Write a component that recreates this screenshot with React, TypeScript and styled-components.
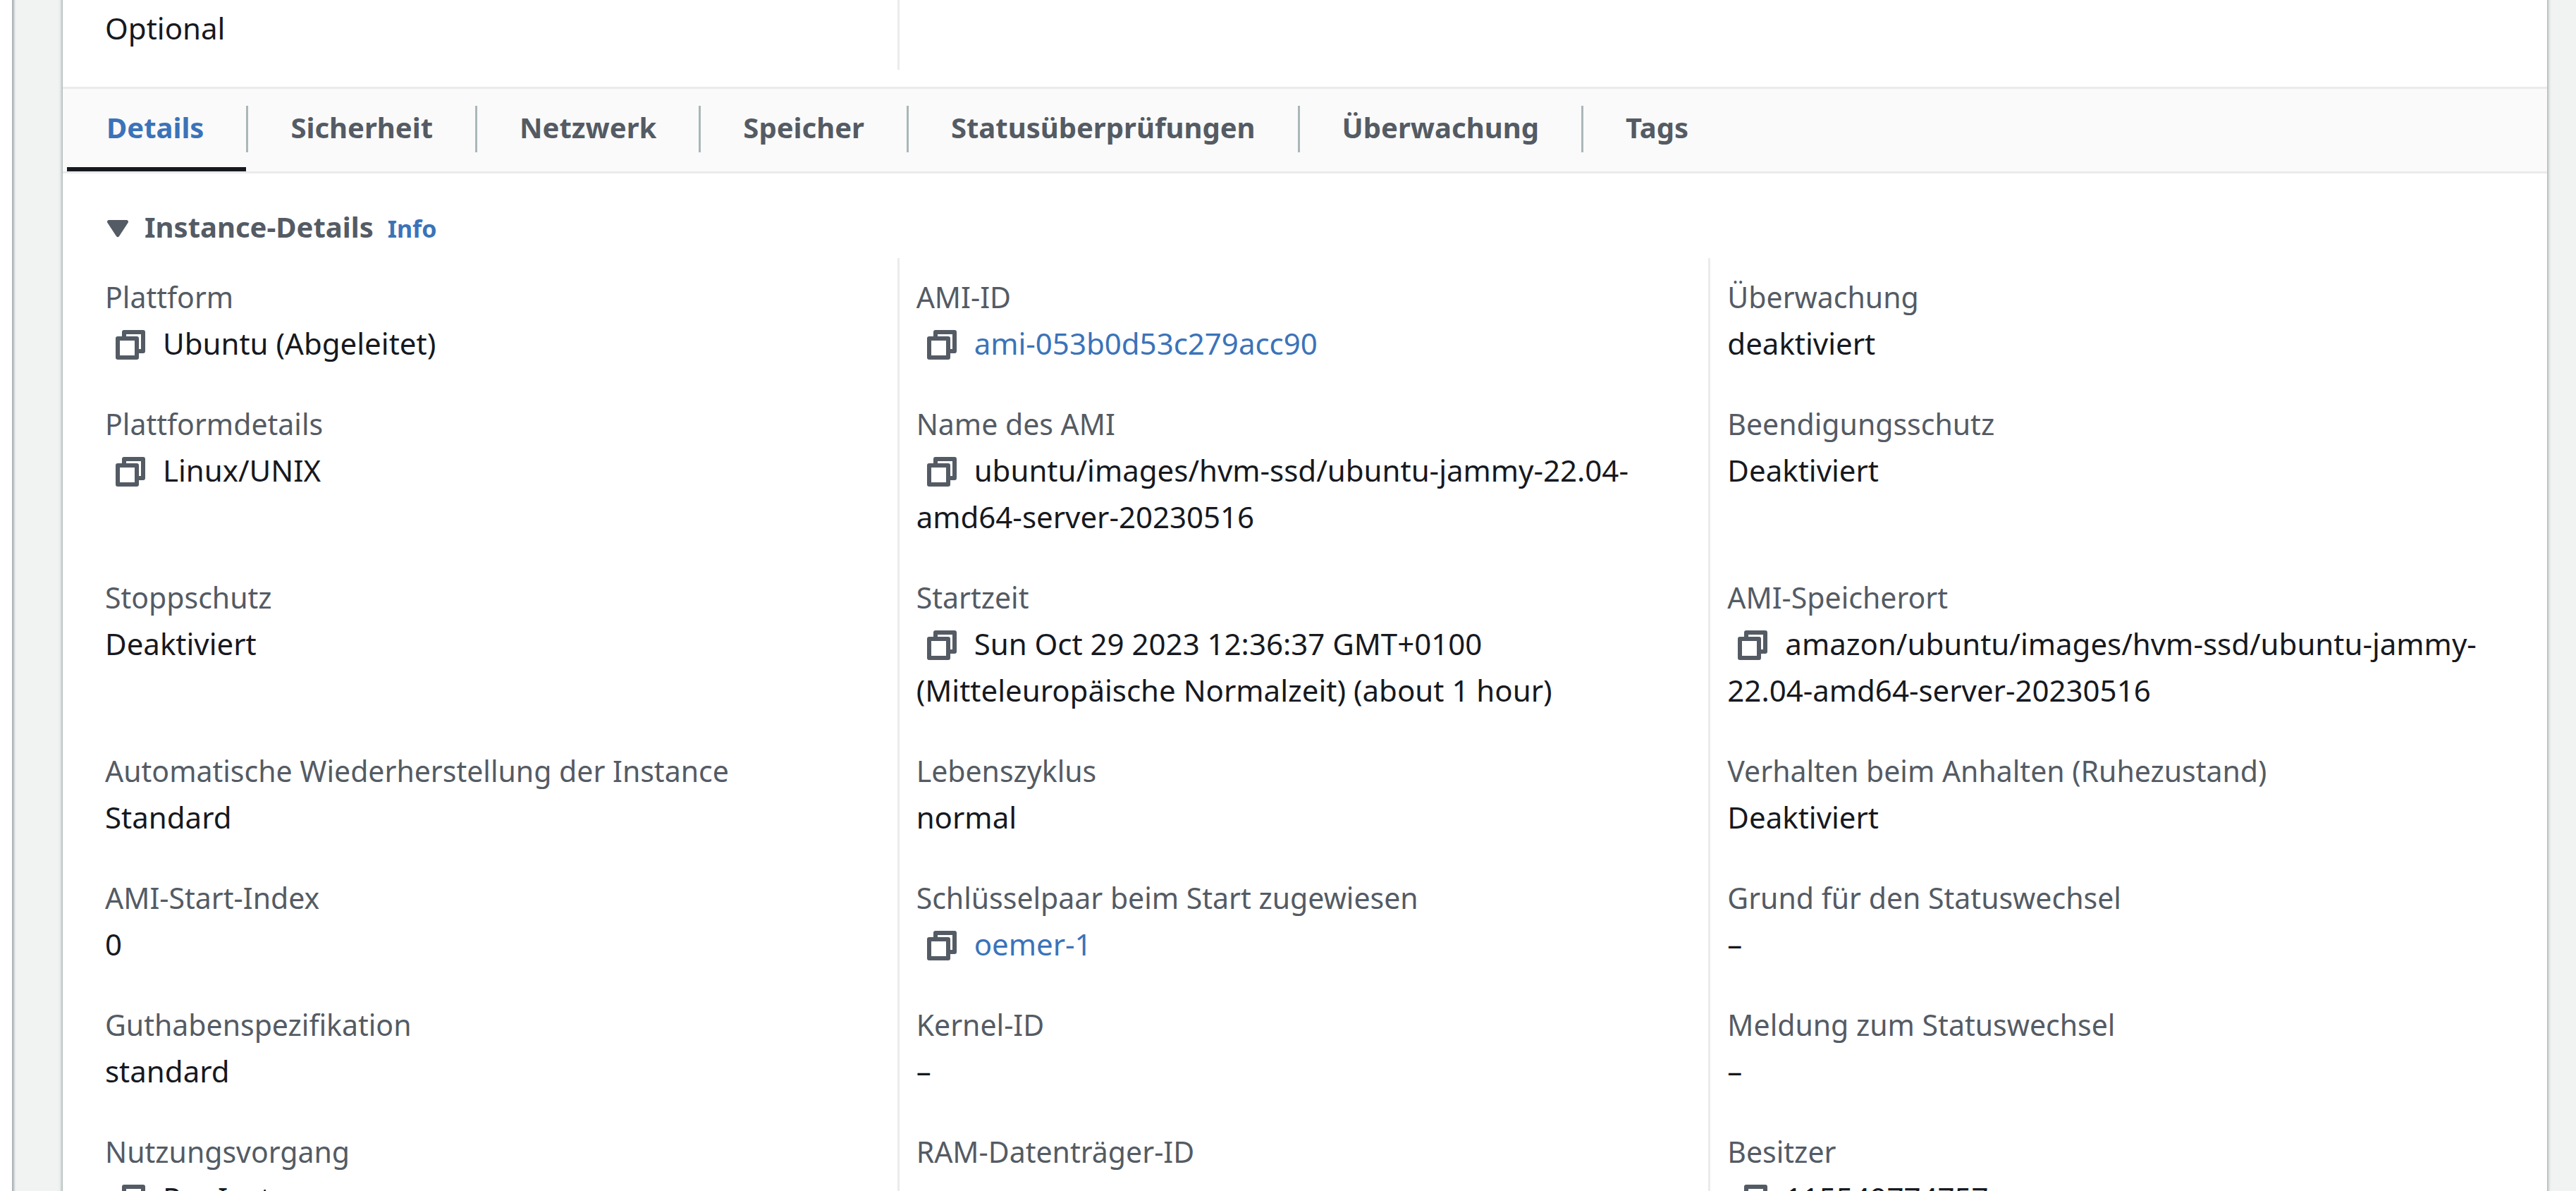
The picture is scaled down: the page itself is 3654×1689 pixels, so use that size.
import React, { useState } from 'react';
import styled, { createGlobalStyle } from 'styled-components';

const ink = '#16191f';
const muted = '#545b64';
const blue = '#3b73b9';
const line = '#ebebeb';

const GlobalStyle = createGlobalStyle`
  * { box-sizing: border-box; }
  body {
    margin: 0;
    background: #ffffff;
    color: ${ink};
    font: 42px/66px "Noto Sans", "Open Sans", sans-serif;
  }
`;

const Shell = styled.div`
  height: 100vh;
  padding-left: 17px;
  overflow: hidden;
`;

const Content = styled.main`
  min-height: 100%;
  padding: 0 41px 0 72px;
  background: #f1f3f3;
  box-shadow: inset 3px -3px 3px rgba(0, 28, 36, 0.3);
`;

const Panel = styled.section`
  min-height: 100vh;
  background: #ffffff;
  box-shadow: 0 -3px 3px rgba(0, 28, 36, 0.3), 3px -3px 3px rgba(0, 28, 36, 0.15),
    -3px -3px 3px rgba(0, 28, 36, 0.15);
`;

const Grid = styled.dl`
  display: grid;
  grid-template-columns: repeat(3, minmax(0, 1fr));
  margin: 0;
  padding: 0 39px 0 33px;
`;

const Summary = styled(Grid)`
  padding-bottom: 24px;
`;

const Cell = styled.div<{ $divided?: boolean; $tight?: boolean }>`
  padding: ${(p) => (p.$tight ? '7px' : '22px')} 24px 26px;
  border-left: 3px solid ${(p) => (p.$divided ? line : 'transparent')};
`;

const Label = styled.dt`
  color: ${muted};
  font-size: 41px;
`;

const Value = styled.dd`
  min-height: 66px;
  margin: 0;
`;

const TabBar = styled.div`
  display: flex;
  padding-left: 6px;
  border-top: 3px solid ${line};
  border-bottom: 3px solid ${line};
  background: #fafafa;
`;

const Tab = styled.button<{ $active: boolean }>`
  padding: 22px 60px 23px;
  border: 0;
  border-bottom: 6px solid ${(p) => (p.$active ? ink : 'transparent')};
  background: none;
  color: ${(p) => (p.$active ? blue : muted)};
  font: inherit;
  font-size: 40px;
  font-weight: 700;
  cursor: pointer;

  &:first-child {
    padding-left: 56px;
  }
`;

const TabDivider = styled.span`
  width: 3px;
  height: 66px;
  margin-top: 24px;
  background: #aab7b8;
`;

const SectionHead = styled.header`
  display: flex;
  align-items: baseline;
  gap: 20px;
  padding: 43px 60px 11px;
`;

const Heading = styled.h2`
  margin: 0;
  font-size: 40px;
  font-weight: 700;
  line-height: 66px;
`;

const Toggle = styled.button`
  display: flex;
  align-items: center;
  gap: 20px;
  padding: 0;
  border: 0;
  background: none;
  color: ${muted};
  font: inherit;
  cursor: pointer;
`;

const ToggleText = styled.span`
  align-self: baseline;
`;

const Triangle = styled.svg`
  width: 36px;
  height: 36px;
  fill: currentColor;
`;

const Link = styled.a`
  color: ${blue};
  text-decoration: none;
`;

const InfoLink = styled(Link)`
  font-size: 34px;
  font-weight: 700;
  line-height: 48px;
`;

const CopyButton = styled.button`
  display: inline-flex;
  margin-right: 10px;
  padding: 0 12px;
  border: 0;
  background: none;
  color: ${muted};
  vertical-align: -10px;
  cursor: pointer;
`;

const CopyIcon = styled.svg`
  width: 48px;
  height: 48px;
  fill: none;
  stroke: currentColor;
  stroke-width: 2;
  stroke-linejoin: round;
`;

const Copy = ({ label }: { label: string }) => (
  <CopyButton type="button" aria-label={`${label} kopieren`}>
    <CopyIcon viewBox="0 0 16 16" aria-hidden="true">
      <path d="M5 4V2h9v9h-2" />
      <path d="M2 5h9v9H2z" />
    </CopyIcon>
  </CopyButton>
);

type Field = { label: string; value: string; copy?: boolean; link?: boolean };

const tabs = ['Details', 'Sicherheit', 'Netzwerk', 'Speicher', 'Statusüberprüfungen', 'Überwachung', 'Tags'];

const fields: Field[] = [
  { label: 'Plattform', value: 'Ubuntu (Abgeleitet)', copy: true },
  { label: 'AMI-ID', value: 'ami-053b0d53c279acc90', copy: true, link: true },
  { label: 'Überwachung', value: 'deaktiviert' },
  { label: 'Plattformdetails', value: 'Linux/UNIX', copy: true },
  { label: 'Name des AMI', value: 'ubuntu/images/hvm-ssd/ubuntu-jammy-22.04-amd64-server-20230516', copy: true },
  { label: 'Beendigungsschutz', value: 'Deaktiviert' },
  { label: 'Stoppschutz', value: 'Deaktiviert' },
  { label: 'Startzeit', value: 'Sun Oct 29 2023 12:36:37 GMT+0100 (Mitteleuropäische Normalzeit) (about 1 hour)', copy: true },
  { label: 'AMI-Speicherort', value: 'amazon/ubuntu/images/hvm-ssd/ubuntu-jammy-22.04-amd64-server-20230516', copy: true },
  { label: 'Automatische Wiederherstellung der Instance', value: 'Standard' },
  { label: 'Lebenszyklus', value: 'normal' },
  { label: 'Verhalten beim Anhalten (Ruhezustand)', value: 'Deaktiviert' },
  { label: 'AMI-Start-Index', value: '0' },
  { label: 'Schlüsselpaar beim Start zugewiesen', value: 'oemer-1', copy: true, link: true },
  { label: 'Grund für den Statuswechsel', value: '–' },
  { label: 'Guthabenspezifikation', value: 'standard' },
  { label: 'Kernel-ID', value: '–' },
  { label: 'Meldung zum Statuswechsel', value: '–' },
  { label: 'Nutzungsvorgang', value: 'RunInstances', copy: true },
  { label: 'RAM-Datenträger-ID', value: '–' },
  { label: 'Besitzer', value: '115549774757', copy: true },
];

export default function App() {
  const [active, setActive] = useState('Details');
  const [open, setOpen] = useState(true);

  return (
    <Shell>
      <GlobalStyle />
      <Content>
        <Panel>
          <Summary as="div">
            <Cell $tight>Optional</Cell>
            <Cell $tight $divided />
          </Summary>
          <TabBar role="tablist">
            {tabs.map((tab, i) => (
              <React.Fragment key={tab}>
                {i > 0 && <TabDivider />}
                <Tab
                  type="button"
                  role="tab"
                  aria-selected={tab === active}
                  $active={tab === active}
                  onClick={() => setActive(tab)}
                >
                  {tab}
                </Tab>
              </React.Fragment>
            ))}
          </TabBar>
          <SectionHead>
            <Heading>
              <Toggle type="button" aria-expanded={open} onClick={() => setOpen(!open)}>
                <Triangle viewBox="0 0 36 36" aria-hidden="true">
                  <path d="M5 8h26q3 1 1.500 4L20 31q-2 2.500-4 0L3.500 12Q2 9 5 8z" />
                </Triangle>
                <ToggleText>Instance-Details</ToggleText>
              </Toggle>
            </Heading>
            <InfoLink href="#info">Info</InfoLink>
          </SectionHead>
          {open && (
            <Grid>
              {fields.map(({ label, value, copy, link }, i) => (
                <Cell key={label} $divided={i % 3 > 0}>
                  <Label>{label}</Label>
                  <Value>
                    {copy && <Copy label={label} />}
                    {link ? <Link href={`#${value}`}>{value}</Link> : value}
                  </Value>
                </Cell>
              ))}
            </Grid>
          )}
        </Panel>
      </Content>
    </Shell>
  );
}
